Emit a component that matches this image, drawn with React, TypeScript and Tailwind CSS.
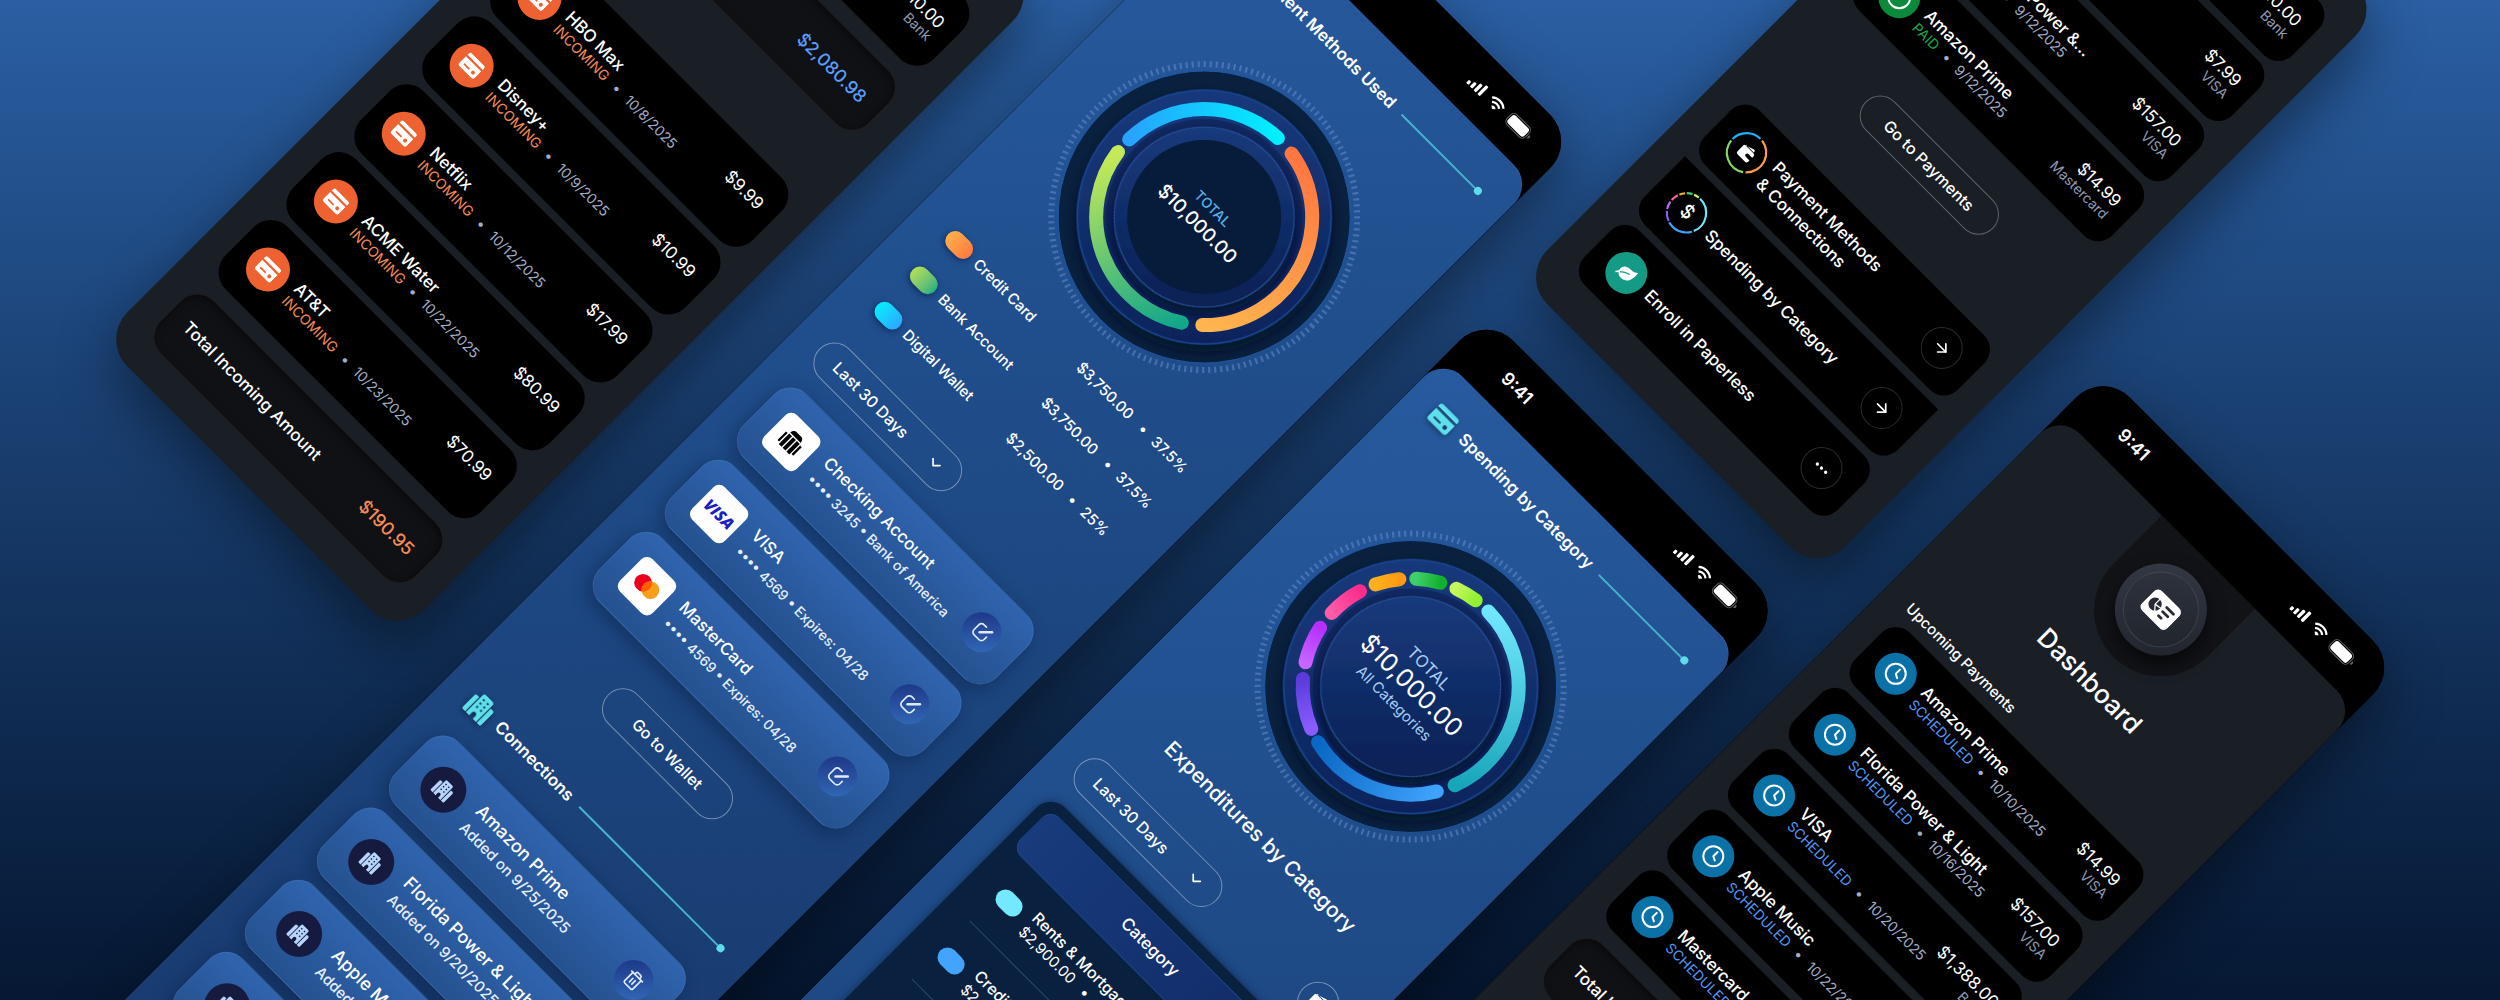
import type { ReactNode } from 'react';
import { ArrowRight, Check, ChevronDown, Clock, Ellipsis, Trash2 } from 'lucide-react';

type IconProps = { className?: string };

function CardIcon({ className }: IconProps) {
  return (
    <svg viewBox="0 0 24 20" fill="currentColor" className={className}>
      <path d="M3 0h18a3 3 0 0 1 3 3v1.5H0V3a3 3 0 0 1 3-3z" />
      <path
        fillRule="evenodd"
        d="M0 7h24v10a3 3 0 0 1-3 3H3a3 3 0 0 1-3-3V7zm5 6.4a1 1 0 0 0 0 2h7a1 1 0 0 0 0-2H5zm13.4-1.2a2.2 2.2 0 1 0 0 4.4 2.2 2.2 0 0 0 0-4.4z"
      />
    </svg>
  );
}

function BuildingIcon({ className }: IconProps) {
  return (
    <svg viewBox="0 0 28 28" fill="currentColor" className={className}>
      <path
        fillRule="evenodd"
        d="M9 1h10a2 2 0 0 1 2 2v24h-4.500v-4a2.500 2.500 0 0 0-5 0v4H7V3a2 2 0 0 1 2-2zm1.300 4v2h2V5h-2zm5.400 0v2h2V5h-2zM10.300 9.800v2h2v-2h-2zm5.400 0v2h2v-2h-2zM10.300 14.600v2h2v-2h-2zm5.400 0v2h2v-2h-2z"
      />
      <path d="M5.800 7v20H2.500A1.500 1.500 0 0 1 1 25.500V9a2 2 0 0 1 2-2h2.800zM22.200 7H25a2 2 0 0 1 2 2v16.500a1.500 1.500 0 0 1-1.500 1.500h-3.300V7z" />
    </svg>
  );
}

function BankIcon({ className }: IconProps) {
  return (
    <svg viewBox="0 0 28 28" fill="currentColor" className={className}>
      <path d="M10 2.500h8c1.800 0 3.400 1.800 4 5H6c.6-3.200 2.200-5 4-5zM6 9h4.300v16H6zM11.800 9h4.400v16h-4.400zM17.700 9H22v16h-4.300z" />
      <path d="M2 10h2.500v13H2zM23.500 10H26v13h-2.500z" />
    </svg>
  );
}

function EditIcon({ className }: IconProps) {
  return (
    <svg viewBox="0 0 24 24" fill="none" stroke="currentColor" strokeWidth="2" strokeLinecap="round" className={className}>
      <path d="M12 3.500H8A4.500 4.500 0 0 0 3.500 8v8A4.500 4.500 0 0 0 8 20.500h8a4.500 4.500 0 0 0 4.500-4.500v-4" />
      <path d="M10.500 13.500 21 3" strokeWidth="3" />
    </svg>
  );
}

function LeafIcon({ className }: IconProps) {
  return (
    <svg viewBox="0 0 24 24" fill="currentColor" className={className}>
      <path d="M21 3c1.500 8-.5 17-9.500 17-3 0-5-1.200-6.300-2.800L3 20l-1-1.200 2.200-3C2.600 8 8 6 13 6c3.500 0 6-1 8-3z" />
      <path d="M6 16c3-3 6-4.500 10-5.500" stroke="#159a85" strokeWidth="1.200" fill="none" />
    </svg>
  );
}

function WalletIcon({ className }: IconProps) {
  return (
    <svg viewBox="0 0 24 24" fill="currentColor" className={className}>
      <path d="M4 6 16 2a2 2 0 0 1 2.500 2v1H4z" />
      <path fillRule="evenodd" d="M4 6h15a3 3 0 0 1 3 3v10a3 3 0 0 1-3 3H5a3 3 0 0 1-3-3V7zm11 5.500a2.500 2.500 0 0 0 0 5h7v-5h-7z" />
    </svg>
  );
}

function ReportIcon({ className }: IconProps) {
  return (
    <svg viewBox="0 0 34 27" className={className}>
      <rect width="34" height="27" rx="6" fill="currentColor" />
      <circle cx="9.500" cy="13.500" r="6.300" fill="#262a33" />
      <path d="M9.500 13.500V6.500M9.500 13.500l6.500-1M9.500 13.500l4.500 5" stroke="currentColor" strokeWidth="1.200" />
      <path d="M19.500 8h9M19.500 13.500h7M19.500 19h3.500" stroke="#262a33" strokeWidth="2.600" strokeLinecap="round" />
    </svg>
  );
}

function StatusBar() {
  return (
    <div className="flex h-[61px] items-center justify-between bg-black pr-9 pl-14 text-white">
      <span className="text-[18px] font-semibold">9:41</span>
      <div className="flex items-center gap-2">
        <svg viewBox="0 0 20 13" fill="currentColor" className="h-[13px] w-5">
          <rect x="0" y="8.500" width="3.400" height="4.500" rx="1.200" />
          <rect x="5.300" y="6" width="3.400" height="7" rx="1.200" />
          <rect x="10.600" y="3" width="3.400" height="10" rx="1.200" />
          <rect x="16" y="0" width="3.400" height="13" rx="1.200" />
        </svg>
        <svg viewBox="0 0 18 13" fill="none" stroke="currentColor" strokeWidth="2.200" className="h-[13px] w-[18px]">
          <path d="M1 4.800C5.500.6 12.500.6 17 4.800" />
          <path d="M4 8c2.800-2.600 7.200-2.600 10 0" />
          <path d="M7 10.800c1.200-1 2.800-1 4 0L9 12.600z" fill="currentColor" strokeWidth="1" />
        </svg>
        <div className="flex items-center gap-px">
          <div className="h-[15px] w-[27px] rounded-[5px] border border-white/40 p-px">
            <div className="h-full rounded-[3px] bg-white" />
          </div>
          <div className="h-1 w-0.5 rounded-r bg-white/40" />
        </div>
      </div>
    </div>
  );
}

// position is given along the rotated axes
function Phone({ place, children }: { place: string; children: ReactNode }) {
  return (
    <section
      className={`absolute w-[420px] overflow-hidden rounded-[38px] shadow-[16px_16px_60px_rgba(0,0,0,0.45)] ${place}`}
    >
      {children}
    </section>
  );
}

const blueScreen =
  'rounded-t-[28px] border-t border-[#2f6cc0]/70 bg-[linear-gradient(135deg,#275b9f_0px,#204e8c_450px,#193d72_1100px)] px-[31px] pt-7';

function SectionTitle({ icon, children }: { icon: ReactNode; children: ReactNode }) {
  return (
    <div className="flex h-[30px] items-center">
      <span className="w-[38px] text-[#5ee0ec] drop-shadow-[0_2px_3px_rgba(0,0,0,0.4)]">{icon}</span>
      <h2 className="text-[17px] font-semibold">{children}</h2>
      <div className="ml-3 flex flex-1 items-center">
        <div className="h-0.5 flex-1 bg-[#46b4cc]" />
        <div className="size-2 rounded-full bg-[#5fdcec]" />
      </div>
    </div>
  );
}

type Segment = { from: number; to: number; a: string; b: string };

function arcPath(from: number, to: number, r: number) {
  const rad = Math.PI / 180;
  const x1 = r * Math.cos(from * rad);
  const y1 = r * Math.sin(from * rad);
  const x2 = r * Math.cos(to * rad);
  const y2 = r * Math.sin(to * rad);
  return `M ${x1} ${y1} A ${r} ${r} 0 ${to - from > 180 ? 1 : 0} 1 ${x2} ${y2}`;
}

const methodSegments: Segment[] = [
  { from: -81, to: 46, a: '#ff7640', b: '#ffb54f' },
  { from: 57, to: 172, a: '#12a78a', b: '#c6ea57' },
  { from: 181, to: 268, a: '#27a3ff', b: '#00f0ff' },
];

const categorySegments: Segment[] = [
  { from: -89, to: 21, a: '#70e6fb', b: '#17a5ba' },
  { from: 31, to: 104, a: '#3fa2fb', b: '#0968c4' },
  { from: 112, to: 139, a: '#8a5cff', b: '#5b3bdc' },
  { from: 148, to: 168, a: '#c665ff', b: '#b62fff' },
  { from: 178, to: 197, a: '#ff5ca8', b: '#fa2c8c' },
  { from: 206, to: 219, a: '#ffb01f', b: '#ff9a14' },
  { from: 228, to: 241, a: '#3fd06a', b: '#12b02f' },
  { from: 250, to: 262, a: '#c3f75c', b: '#92f032' },
];

function Donut({ id, segments, hollow, children }: { id: string; segments: Segment[]; hollow?: boolean; children: ReactNode }) {
  return (
    <div className="relative mx-auto size-80">
      <svg viewBox="-160 -160 320 320" className="size-80">
        <defs>
          <linearGradient id={`${id}-ring`} x1="0" y1="0" x2="1" y2="1">
            <stop offset="0" stopColor="#173e82" />
            <stop offset="1" stopColor="#0c1f55" />
          </linearGradient>
          <linearGradient id={`${id}-disc`} x1="0" y1="0" x2="1" y2="1">
            <stop offset="0" stopColor="#174084" />
            <stop offset="1" stopColor="#0a1a4c" />
          </linearGradient>
          <filter id={`${id}-shadow`} x="-30%" y="-30%" width="160%" height="160%">
            <feDropShadow dx="5" dy="5" stdDeviation="7" floodColor="#000a20" floodOpacity="0.75" />
          </filter>
          {segments.map((s, i) => (
            <linearGradient
              key={i}
              id={`${id}-${i}`}
              gradientUnits="userSpaceOnUse"
              x1={108 * Math.cos((s.from * Math.PI) / 180)}
              y1={108 * Math.sin((s.from * Math.PI) / 180)}
              x2={108 * Math.cos((s.to * Math.PI) / 180)}
              y2={108 * Math.sin((s.to * Math.PI) / 180)}
            >
              <stop offset="0" stopColor={s.a} />
              <stop offset="1" stopColor={s.b} />
            </linearGradient>
          ))}
        </defs>
        <circle r="153" fill="none" stroke="#7096dc" strokeOpacity="0.45" strokeWidth="6" strokeDasharray="2.200 3.800" />
        <circle r="146" fill="#09213f" stroke="#1f57a6" strokeWidth="1" />
        <circle r="127" fill={`url(#${id}-ring)`} stroke="#1a4794" strokeWidth="1.500" filter={`url(#${id}-shadow)`} />
        <circle r="98" fill="#0a1c4c" opacity="0.5" />
        <circle r="90" fill={`url(#${id}-disc)`} stroke="#2a54a0" strokeWidth="1" filter={`url(#${id}-shadow)`} />
        {hollow && <circle r="77" fill="#071c3a" />}
        {segments.map((s, i) => (
          <path
            key={i}
            d={arcPath(s.from, s.to, 108)}
            fill="none"
            stroke={`url(#${id}-${i})`}
            strokeWidth="14"
            strokeLinecap="round"
          />
        ))}
      </svg>
      <div className="absolute inset-0 flex flex-col items-center justify-center">{children}</div>
    </div>
  );
}

function PeriodSelect({ id }: { id: string }) {
  return (
    <div className="relative w-[193px]">
      <label htmlFor={id} className="sr-only">Period</label>
      <select
        id={id}
        className="h-[42px] w-full appearance-none rounded-full border-[1.5px] border-white/40 bg-transparent pl-[22px] text-[16px] font-medium text-white"
      >
        <option>Last 30 Days</option>
      </select>
      <ChevronDown className="pointer-events-none absolute top-[11px] right-5 size-5" />
    </div>
  );
}

function RoundButton({ label, children }: { label: string; children: ReactNode }) {
  return (
    <button
      aria-label={label}
      className="flex size-10 shrink-0 items-center justify-center rounded-full bg-[linear-gradient(135deg,#1b2f80,#3370bd)] text-[#dfe9ff]"
    >
      {children}
    </button>
  );
}

function BlueCard({ icon, children, action }: { icon: ReactNode; children: ReactNode; action: ReactNode }) {
  return (
    <li className="flex h-[90px] items-center rounded-3xl border border-white/5 bg-linear-to-b from-[#2f64ae] to-[#25518f] px-[22px] shadow-[0_6px_18px_rgba(5,20,50,0.4)]">
      {icon}
      <div className="ml-[15px] flex-1 whitespace-nowrap">{children}</div>
      {action}
    </li>
  );
}

const legend = [
  { name: 'Credit Card', amount: '$3,750.00', share: '37.5%', pill: 'bg-linear-to-r from-[#ffb14a] to-[#ff7840]' },
  { name: 'Bank Account', amount: '$3,750.00', share: '37.5%', pill: 'bg-linear-to-r from-[#b4e04d] to-[#1fb080]' },
  { name: 'Digital Wallet', amount: '$2,500.00', share: '25%', pill: 'bg-linear-to-r from-[#00f0ff] to-[#2aa5ff]' },
];

const tile = 'flex size-[46px] items-center justify-center rounded-lg bg-white';

const wallet = [
  {
    name: 'Checking Account',
    detail: '•••• 3245 • Bank of America',
    icon: <div className={tile}><BankIcon className="size-[26px] text-black" /></div>,
  },
  {
    name: 'VISA',
    detail: '•••• 4569 • Expires: 04/28',
    icon: <div className={`${tile} font-['Open_Sans','Inter',sans-serif] text-[16px] font-extrabold text-[#1a1fc0] italic`}>VISA</div>,
  },
  {
    name: 'MasterCard',
    detail: '•••• 4569 • Expires: 04/28',
    icon: (
      <div className={tile}>
        <svg viewBox="0 0 32 20" className="w-[30px]">
          <circle cx="10.500" cy="10" r="9.500" fill="#eb001b" />
          <circle cx="21.500" cy="10" r="9.500" fill="#f79e1b" />
          <path d="M16 2.300a9.500 9.500 0 0 1 0 15.400 9.500 9.500 0 0 1 0-15.400z" fill="#ff5f00" />
        </svg>
      </div>
    ),
  },
];

const connections = [
  { name: 'Amazon Prime', date: '9/25/2025' },
  { name: 'Florida Power & Light', date: '9/20/2025' },
  { name: 'Apple Music', date: '9/18/2025' },
  { name: 'Disney+', date: '9/15/2025' },
];

function PaymentMethodsPhone() {
  return (
    <Phone place="left-[795px] top-[-1015px] bg-black">
      <StatusBar />
      <div className={`${blueScreen} h-[1900px]`}>
        <SectionTitle icon={<CardIcon className="h-[22px] w-[26px]" />}>Payment Methods Used</SectionTitle>
        <div className="mt-[37px]">
          <Donut id="methods" segments={methodSegments} hollow>
            <div className="text-[14px] leading-5 font-medium text-[#5aaee6]">TOTAL</div>
            <div className="text-[19px] leading-6 font-medium">$10,000.00</div>
          </Donut>
        </div>
        <ul className="mt-2 pl-2.5">
          {legend.map((l) => (
            <li key={l.name} className="flex h-[50px] items-center text-[15px] font-medium whitespace-nowrap">
              <span className={`mr-2 h-5 w-[31px] rounded-full shadow-[0_2px_6px_rgba(5,20,60,0.6)] ${l.pill}`} />
              <span className="w-[146px]">{l.name}</span>
              <span className="w-[87px]">{l.amount}</span>
              <span className="w-[18px]">•</span>
              <span>{l.share}</span>
            </li>
          ))}
        </ul>
        <div className="mt-[26px]">
          <PeriodSelect id="methods-period" />
        </div>
        <ul className="mt-5 flex flex-col gap-3">
          {wallet.map((w) => (
            <BlueCard
              key={w.name}
              icon={w.icon}
              action={<RoundButton label={`Edit ${w.name}`}><EditIcon className="size-5" /></RoundButton>}
            >
              <h3 className="text-[17px] leading-6 font-medium">{w.name}</h3>
              <p className="text-[14px] leading-6 font-medium text-[#e4edfb]">{w.detail}</p>
            </BlueCard>
          ))}
        </ul>
        <button className="mx-auto mt-[38px] block h-[42px] w-[168px] rounded-full border-[1.5px] border-white/40 text-[16px] font-medium">
          Go to Wallet
        </button>
        <div className="mt-16">
          <SectionTitle icon={<BuildingIcon className="size-7" />}>Connections</SectionTitle>
        </div>
        <ul className="mt-6 flex flex-col gap-3">
          {connections.map((c) => (
            <BlueCard
              key={c.name}
              icon={
                <div className="flex size-[46px] items-center justify-center rounded-full bg-[#171a3f] text-[#b5d5fb]">
                  <BuildingIcon className="size-5" />
                </div>
              }
              action={<RoundButton label={`Remove ${c.name}`}><Trash2 className="size-5" /></RoundButton>}
            >
              <h3 className="text-[18px] leading-6 font-medium">{c.name}</h3>
              <p className="text-[15px] leading-6 font-medium text-[#e4edfb]">Added on {c.date}</p>
            </BlueCard>
          ))}
        </ul>
      </div>
    </Phone>
  );
}

const categories = [
  { name: 'Rents & Mortgage', amount: '$2,900.00', share: '29%', pill: 'bg-[#74e9fd]' },
  { name: 'Credit Cards', amount: '$2,100.00', share: '21%', pill: 'bg-[#43a4fb]' },
  { name: 'Utilities', amount: '$1,200.00', share: '12%', pill: 'bg-[#8a5cff]' },
];

function SpendingPhone() {
  return (
    <Phone place="left-[1273px] top-[-829px] bg-black">
      <StatusBar />
      <div className={`${blueScreen} h-[1100px]`}>
        <SectionTitle icon={<CardIcon className="h-[22px] w-[26px]" />}>Spending by Category</SectionTitle>
        <div className="mt-[37px]">
          <Donut id="categories" segments={categorySegments}>
            <div className="text-[17px] leading-5 text-[#a9cbf0]">TOTAL</div>
            <div className="text-[25px] leading-7">$10,000.00</div>
            <div className="text-[15px] leading-6 text-[#a9cbf0]">All Categories</div>
          </Donut>
        </div>
        <h2 className="mt-[37px] text-center text-[21px] leading-8 font-medium">Expenditures by Category</h2>
        <div className="mt-[39px] flex items-center justify-between">
          <PeriodSelect id="categories-period" />
          <button aria-label="Show as list" className="flex size-[42px] items-center justify-center rounded-full border-[1.5px] border-white/40">
            <WalletIcon className="size-5" />
          </button>
        </div>
        <div className="mt-5 rounded-[20px] bg-[#09213f] p-[11px] shadow-[0_0_8px_rgba(5,20,50,0.5)]">
          <table className="w-full border-separate border-spacing-0 text-left">
            <thead>
              <tr>
                <th className="h-[55px] rounded-xl border border-[#1f4a93] bg-linear-to-r from-[#173b7c] to-[#122a66] text-center text-[17px] font-medium">
                  Category
                </th>
              </tr>
            </thead>
            <tbody>
              {categories.map((c) => (
                <tr key={c.name}>
                  <td className="px-[22px]">
                    <div className="flex h-[82px] items-center border-b border-[#2c4a70] whitespace-nowrap">
                      <span className={`mr-3 h-5 w-[30px] rounded-full ${c.pill}`} />
                      <div>
                        <div className="text-[16px] leading-5 font-medium">{c.name}</div>
                        <div className="text-[15px] leading-5">
                          {c.amount} <span className="px-2">•</span> {c.share}
                        </div>
                      </div>
                    </div>
                  </td>
                </tr>
              ))}
            </tbody>
          </table>
        </div>
      </div>
    </Phone>
  );
}

type Bill = { name: string; date: string; amount: string; method?: string };

const looks = {
  INCOMING: { text: 'text-[#f68a54]', badge: 'bg-[#ee6231]', icon: <CardIcon className="h-[18px] w-[22px]" /> },
  SCHEDULED: { text: 'text-[#5597f7]', badge: 'bg-[#0b72a8]', icon: <Clock className="size-6" /> },
  PAID: { text: 'text-[#1ba94c]', badge: 'bg-[#0b8a3c]', icon: <Check className="size-6 rounded-full border-2 p-0.5" /> },
};

function BillRow({ bill, status, tall }: { bill: Bill; status: keyof typeof looks; tall?: boolean }) {
  const look = looks[status];
  return (
    <li
      className={`flex items-center bg-black px-[18px] whitespace-nowrap ${tall ? 'h-[88px] rounded-3xl' : 'h-[77px] rounded-[20px]'}`}
    >
      <div className={`flex shrink-0 items-center justify-center rounded-full ${look.badge} ${tall ? 'size-11' : 'size-[42px]'}`}>
        {look.icon}
      </div>
      <div className="ml-2.5 flex-1">
        <h3 className="text-[17px] leading-[18px] font-medium">{bill.name}</h3>
        <p className="flex text-[14px] leading-[18px] text-[#a3aec6]">
          <span className={look.text}>{status}</span>
          <span className="w-7 text-center">•</span>
          <span>{bill.date}</span>
        </p>
      </div>
      <div className="h-9 text-right">
        <div className="text-[17px] leading-[18px]">{bill.amount}</div>
        {bill.method && <div className="text-[14px] leading-[18px] text-[#8f9ab3]">{bill.method}</div>}
      </div>
    </li>
  );
}

function TotalRow({ label, amount, color }: { label: string; amount: string; color: string }) {
  return (
    <div className="mt-4 flex h-[76px] items-center justify-between rounded-3xl border border-white/5 bg-[#101115] px-5 shadow-[inset_0_3px_8px_rgba(0,0,0,0.5)]">
      <span className="text-[17px] font-medium">{label}</span>
      <span className={`text-[18px] font-medium ${color}`}>{amount}</span>
    </div>
  );
}

const incoming: Bill[] = [
  { name: 'HBO Max', date: '10/8/2025', amount: '$9.99' },
  { name: 'Disney+', date: '10/9/2025', amount: '$10.99' },
  { name: 'Netflix', date: '10/12/2025', amount: '$17.99' },
  { name: 'ACME Water', date: '10/22/2025', amount: '$80.99' },
  { name: 'AT&T', date: '10/23/2025', amount: '$70.99' },
];

const scheduled: Bill[] = [
  { name: 'Amazon Prime', date: '10/10/2025', amount: '$14.99', method: 'VISA' },
  { name: 'Florida Power & Light', date: '10/16/2025', amount: '$157.00', method: 'VISA' },
  { name: 'VISA', date: '10/20/2025', amount: '$1,388.00', method: 'Bank' },
  { name: 'Apple Music', date: '10/22/2025', amount: '$10.99', method: 'VISA' },
  { name: 'Mastercard', date: '10/24/2025', amount: '$510.00', method: 'Bank' },
];

const paid: Bill[] = [
  { name: 'Mastercard', date: '9/15/2025', amount: '$510.00', method: 'Bank' },
  { name: 'Apple Music', date: '9/14/2025', amount: '$7.99', method: 'VISA' },
  { name: 'Florida Power &...', date: '9/12/2025', amount: '$157.00', method: 'VISA' },
  { name: 'Amazon Prime', date: '9/12/2025', amount: '$14.99', method: 'Mastercard' },
];

function IncomingPhone() {
  return (
    <Phone place="left-[311px] top-[-739px] bg-[#1a1e25] px-[29px] pt-14 pb-8">
      <ul>
        <BillRow bill={scheduled[4]} status="SCHEDULED" tall />
      </ul>
      <TotalRow label="Total Payments" amount="$2,080.98" color="text-[#5a9dfb]" />
      <h2 className="h-[76px] pt-8 text-[16px] font-medium">Incoming</h2>
      <ul className="flex flex-col gap-2">
        {incoming.map((b) => <BillRow key={b.name} bill={b} status="INCOMING" tall />)}
      </ul>
      <TotalRow label="Total Incoming Amount" amount="$190.95" color="text-[#f68a54]" />
    </Phone>
  );
}

// small ring drawn around the link icons
function MiniRing({ segments, children }: { segments: Segment[]; children: ReactNode }) {
  return (
    <div className="relative size-[42px]">
      <svg viewBox="-126 -126 252 252" className="size-full">
        {segments.map((s) => (
          <path key={s.from} d={arcPath(s.from - 2, s.to + 2, 118)} fill="none" stroke={s.a} strokeWidth="13" />
        ))}
      </svg>
      <div className="absolute inset-0 flex items-center justify-center">{children}</div>
    </div>
  );
}

const linkSegments: Segment[] = [
  { ...methodSegments[0], a: '#ff9d48' },
  { ...methodSegments[1], a: '#86d864' },
  { ...methodSegments[2], a: '#1fb4f5' },
];

function LinkRow({ icon, title, action, shape }: { icon: ReactNode; title: ReactNode; action: ReactNode; shape: string }) {
  return (
    <li className={`flex h-[77px] items-center bg-black px-5 ${shape}`}>
      {icon}
      <h3 className="ml-2 flex-1 text-[17px] leading-[23px] font-medium whitespace-nowrap">{title}</h3>
      <button aria-label="Open" className="flex size-[42px] items-center justify-center rounded-full border-[1.5px] border-[#2b2b2d]">
        {action}
      </button>
    </li>
  );
}

function PaidPhone() {
  return (
    <Phone place="left-[1271px] top-[-1678px] bg-[#1a1e25] px-[31px] pt-[39px] pb-10">
      <ul className="flex flex-col gap-2">
        {paid.map((b) => <BillRow key={b.name} bill={b} status="PAID" />)}
      </ul>
      <button className="mx-auto mt-[39px] mb-[61px] block h-[41px] w-[180px] rounded-full border-[1.5px] border-white/30 text-[16px] font-medium">
        Go to Payments
      </button>
      <ul className="flex flex-col gap-2">
        <LinkRow
          shape="rounded-[20px]"
          icon={<MiniRing segments={linkSegments}><WalletIcon className="size-[18px]" /></MiniRing>}
          title={<>Payment Methods<br />&amp; Connections</>}
          action={<ArrowRight className="size-5" />}
        />
        <LinkRow
          shape="rounded-b-[20px]"
          icon={<MiniRing segments={categorySegments}><span className="text-[19px] font-medium">$</span></MiniRing>}
          title="Spending by Category"
          action={<ArrowRight className="size-5" />}
        />
        <LinkRow
          shape="rounded-[20px]"
          icon={
            <div className="flex size-[42px] items-center justify-center rounded-full bg-[#159a85]">
              <LeafIcon className="size-[22px]" />
            </div>
          }
          title="Enroll in Paperless"
          action={<Ellipsis className="size-5" />}
        />
      </ul>
    </Phone>
  );
}

function DashboardPhone() {
  return (
    <Phone place="left-[1749px] top-[-1225px] bg-black">
      <StatusBar />
      <div className="h-[1100px] rounded-t-[28px] bg-[#1a1e25] px-[29px]">
        <div className="mx-auto flex h-[134px] w-[132px] items-center justify-center rounded-b-full bg-[#121317]">
          <div className="flex size-[92px] items-center justify-center rounded-full bg-[linear-gradient(135deg,#363b47,#1e222a)] p-2 shadow-[6px_6px_18px_rgba(0,0,0,0.6)]">
            <div className="flex size-full items-center justify-center rounded-full border border-white/10 bg-[linear-gradient(135deg,#30343f,#1f232b)]">
              <ReportIcon className="w-9" />
            </div>
          </div>
        </div>
        <h1 className="mt-4 text-center text-[26px] leading-9 font-medium">Dashboard</h1>
        <h2 className="mt-[45px] text-[15px] leading-6 font-medium">Upcoming Payments</h2>
        <ul className="mt-1.5 flex flex-col gap-[9px]">
          {scheduled.map((b) => <BillRow key={b.name} bill={b} status="SCHEDULED" />)}
        </ul>
        <TotalRow label="Total Upcoming Payments" amount="$2,080.98" color="text-[#5a9dfb]" />
      </div>
    </Phone>
  );
}

export default function App() {
  return (
    <main className="relative h-screen overflow-hidden bg-linear-to-b from-[#2a5fa3] to-[#061833] font-['Inter','Noto_Sans',sans-serif] text-white">
      <div className="absolute top-0 left-0 origin-top-left rotate-45">
        <IncomingPhone />
        <PaymentMethodsPhone />
        <SpendingPhone />
        <PaidPhone />
        <DashboardPhone />
      </div>
    </main>
  );
}
